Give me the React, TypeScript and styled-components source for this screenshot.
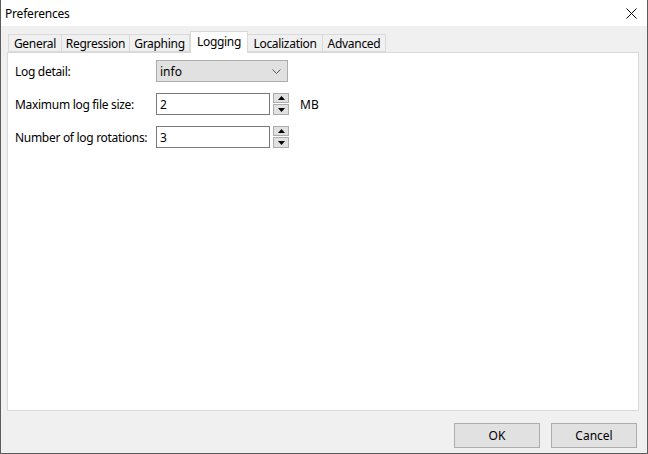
import React from "react";
import styled, { createGlobalStyle } from "styled-components";

const Global = createGlobalStyle`
  html, body { margin: 0; padding: 0; }
  body { font-family: "Noto Sans", "Liberation Sans", sans-serif; font-size: 12px; color: #000; }
  * { box-sizing: border-box; }
`;

const Window = styled.div`
  width: 648px;
  height: 454px;
  background: #f0f0f0;
  border: 1px solid #5c5c5c;
  border-top: none;
  display: flex;
  flex-direction: column;
`;

const TitleBar = styled.div`
  height: 26px;
  background: #fff;
  display: flex;
  align-items: center;
  justify-content: space-between;
  padding: 1px 10px 0 4px;
  flex: none;
`;

const Title = styled.span`
  font-size: 12px;
  letter-spacing: -0.2px;
`;

const CloseIcon = styled.svg`
  width: 11px;
  height: 11px;
  display: block;
`;

const Body = styled.div`
  flex: 1;
  display: flex;
  flex-direction: column;
  padding: 5px 8px 5px 6px;
`;

const TabStrip = styled.div`
  display: flex;
  align-items: flex-end;
  height: 21px;
  padding-left: 1px;
  flex: none;
`;

const Tab = styled.div<{ $w: number; $active?: boolean }>`
  width: ${(p) => p.$w}px;
  height: ${(p) => (p.$active ? 22 : 18)}px;
  margin-bottom: ${(p) => (p.$active ? -1 : 0)}px;
  background: ${(p) => (p.$active ? "#fff" : "#f0f0f0")};
  border: 1px solid #d9d9d9;
  border-bottom: ${(p) => (p.$active ? "none" : "1px solid #d9d9d9")};
  border-left: ${(p) => (p.$active ? "1px solid #d9d9d9" : "none")};
  &:first-child { border-left: 1px solid #d9d9d9; }
  display: flex;
  align-items: ${(p) => (p.$active ? "flex-start" : "center")};
  padding-top: ${(p) => (p.$active ? 1 : 0)}px;
  justify-content: center;
  font-size: 12px;
  letter-spacing: -0.3px;
  position: relative;
  z-index: ${(p) => (p.$active ? 2 : 1)};
  white-space: nowrap;
`;

const Panel = styled.div`
  flex: 1;
  background: #fff;
  border: 1px solid #d9d9d9;
  padding: 7px 7px;
  display: flex;
  flex-direction: column;
  gap: 11px;
  position: relative;
  z-index: 1;
`;

const Row = styled.div`
  display: flex;
  align-items: center;
  height: 22px;
`;

const Label = styled.div`
  width: 141px;
  font-size: 12px;
  letter-spacing: -0.3px;
  white-space: nowrap;
`;

const Combo = styled.div`
  width: 132px;
  height: 22px;
  background: #e1e1e1;
  border: 1px solid #adadad;
  display: flex;
  align-items: center;
  justify-content: space-between;
  padding: 0 6px 0 3px;
  font-size: 12px;
`;

const Chevron = styled.svg`
  width: 9px;
  height: 5px;
  display: block;
`;

const Input = styled.div`
  width: 114px;
  height: 22px;
  background: #fff;
  border: 1px solid #7a7a7a;
  display: flex;
  align-items: center;
  padding-left: 3px;
  font-size: 12px;
`;

const Spinner = styled.div`
  margin-left: 3px;
  width: 16px;
  height: 22px;
  display: flex;
  flex-direction: column;
  gap: 1px;
`;

const SpinButton = styled.div<{ $h: number }>`
  height: ${(p) => p.$h}px;
  background: #e1e1e1;
  border: 1px solid #adadad;
  display: flex;
  align-items: center;
  justify-content: center;
`;

const Arrow = styled.svg`
  width: 7px;
  height: 4px;
  display: block;
`;

const Unit = styled.span`
  margin-left: 11px;
  font-size: 12px;
`;

const ButtonRow = styled.div`
  display: flex;
  justify-content: flex-end;
  gap: 11px;
  margin-top: 12px;
  padding-right: 2px;
  flex: none;
`;

const Button = styled.div`
  width: 86px;
  height: 25px;
  background: #e1e1e1;
  border: 1px solid #adadad;
  display: flex;
  align-items: center;
  justify-content: center;
  font-size: 12px;
`;

const UpArrow = () => (
  <Arrow viewBox="0 0 7 4">
    <polygon points="0,4 7,4 3.5,0" fill="#000" />
  </Arrow>
);
const DownArrow = () => (
  <Arrow viewBox="0 0 7 4">
    <polygon points="0,0 7,0 3.5,4" fill="#000" />
  </Arrow>
);

const SpinBox = () => (
  <Spinner>
    <SpinButton $h={10}>
      <UpArrow />
    </SpinButton>
    <SpinButton $h={11}>
      <DownArrow />
    </SpinButton>
  </Spinner>
);

const tabs: { name: string; w: number; active?: boolean }[] = [
  { name: "General", w: 54 },
  { name: "Regression", w: 68 },
  { name: "Graphing", w: 60 },
  { name: "Logging", w: 58, active: true },
  { name: "Localization", w: 75 },
  { name: "Advanced", w: 63 },
];

export default function App() {
  return (
    <>
      <Global />
      <Window>
        <TitleBar>
          <Title>Preferences</Title>
          <CloseIcon viewBox="0 0 11 11">
            <path d="M0.5 0.5 L10.5 10.5 M10.5 0.5 L0.5 10.5" stroke="#000" strokeWidth="1" />
          </CloseIcon>
        </TitleBar>
        <Body>
          <TabStrip>
            {tabs.map((t) => (
              <Tab key={t.name} $w={t.w} $active={t.active}>
                {t.name}
              </Tab>
            ))}
          </TabStrip>
          <Panel>
            <Row>
              <Label>Log detail:</Label>
              <Combo>
                <span>info</span>
                <Chevron viewBox="0 0 9 5">
                  <path d="M0.5 0.5 L4.5 4.5 L8.5 0.5" stroke="#555" strokeWidth="1" fill="none" />
                </Chevron>
              </Combo>
            </Row>
            <Row>
              <Label>Maximum log file size:</Label>
              <Input>2</Input>
              <SpinBox />
              <Unit>MB</Unit>
            </Row>
            <Row>
              <Label>Number of log rotations:</Label>
              <Input>3</Input>
              <SpinBox />
            </Row>
          </Panel>
          <ButtonRow>
            <Button>OK</Button>
            <Button>Cancel</Button>
          </ButtonRow>
        </Body>
      </Window>
    </>
  );
}
